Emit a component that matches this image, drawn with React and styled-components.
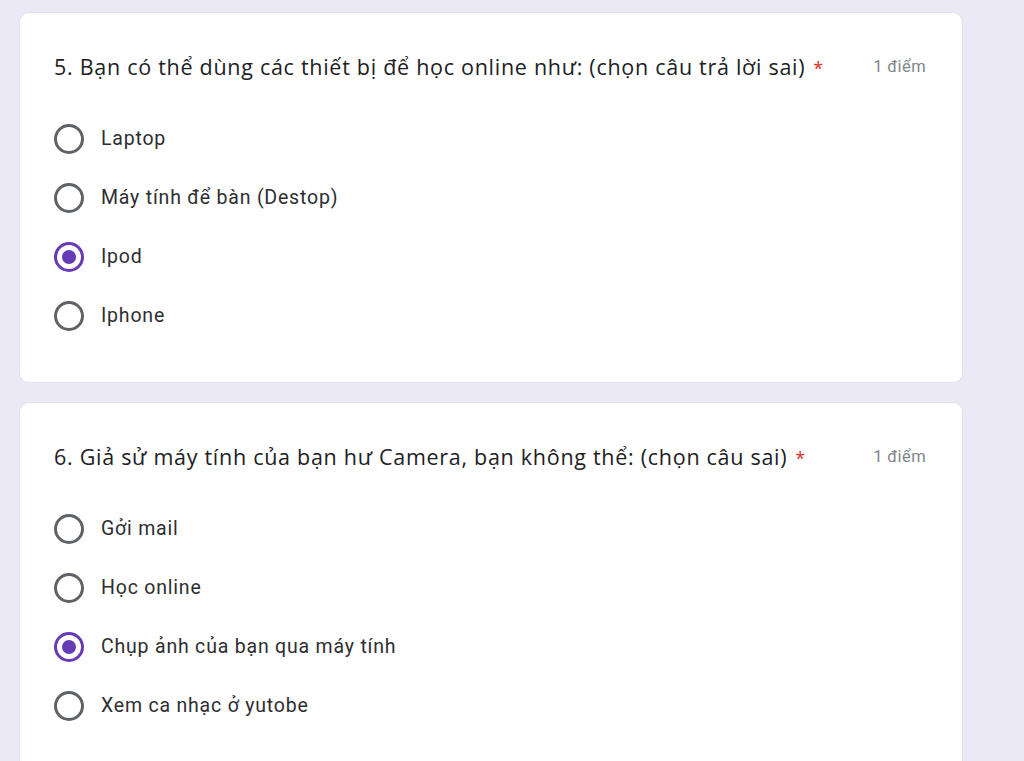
import React from "react";
import styled, { createGlobalStyle } from "styled-components";

const Global = createGlobalStyle`
  html, body { margin: 0; padding: 0; background: #ece9f6; }
  body { font-family: Roboto, "Noto Sans", Arial, sans-serif; }
`;

const Page = styled.div`
  width: 1024px;
  height: 761px;
  overflow: hidden;
  box-sizing: border-box;
  padding: 12px 0 0 19px;
  display: flex;
  flex-direction: column;
  gap: 19px;
`;

const Card = styled.div`
  width: 944px;
  box-sizing: border-box;
  background: #fff;
  border: 1px solid #e2e0ea;
  border-radius: 10px;
  padding: 38px 36px 37px 34px;
  flex-shrink: 0;
`;

const Header = styled.div`
  display: flex;
  justify-content: space-between;
  align-items: center;
  height: 30px;
  margin-bottom: 28px;
`;

const Title = styled.div`
  font-family: "Open Sans", Roboto, sans-serif;
  font-size: 21.5px;
  color: #202124;
  letter-spacing: 0.72px;
`;

const Star = styled.span`
  color: #d93025;
  margin-left: 8px;
  font-size: 18px;
`;

const Points = styled.div`
  font-size: 16.5px;
  color: #80868b;
  letter-spacing: 0.4px;
`;

const Options = styled.div`
  display: flex;
  flex-direction: column;
`;

const Row = styled.label`
  display: flex;
  align-items: center;
  height: 59px;
  gap: 17px;
`;

const Radio = styled.span`
  width: 30px;
  height: 30px;
  box-sizing: border-box;
  border-radius: 50%;
  border: 3px solid ${(p) => (p.$checked ? "#673ab7" : "#5f6368")};
  display: flex;
  align-items: center;
  justify-content: center;
  flex-shrink: 0;
  &::after {
    content: "";
    width: 14px;
    height: 14px;
    border-radius: 50%;
    background: #673ab7;
    display: ${(p) => (p.$checked ? "block" : "none")};
  }
`;

const Label = styled.span`
  font-size: 19.5px;
  color: #2d2e30;
  letter-spacing: 0.8px;
`;

const questions = [
  {
    title: "5. Bạn có thể dùng các thiết bị để học online như: (chọn câu trả lời sai)",
    options: ["Laptop", "Máy tính để bàn (Destop)", "Ipod", "Iphone"],
    checked: 2,
  },
  {
    title: "6. Giả sử máy tính của bạn hư Camera, bạn không thể: (chọn câu sai)",
    options: ["Gởi mail", "Học online", "Chụp ảnh của bạn qua máy tính", "Xem ca nhạc ở yutobe"],
    checked: 2,
  },
];

export default function App() {
  return (
    <>
      <Global />
      <Page>
        {questions.map((q, i) => (
          <Card key={i}>
            <Header>
              <Title>
                {q.title}
                <Star>*</Star>
              </Title>
              <Points>1 điểm</Points>
            </Header>
            <Options>
              {q.options.map((o, j) => (
                <Row key={j}>
                  <Radio $checked={j === q.checked} />
                  <Label>{o}</Label>
                </Row>
              ))}
            </Options>
          </Card>
        ))}
      </Page>
    </>
  );
}
